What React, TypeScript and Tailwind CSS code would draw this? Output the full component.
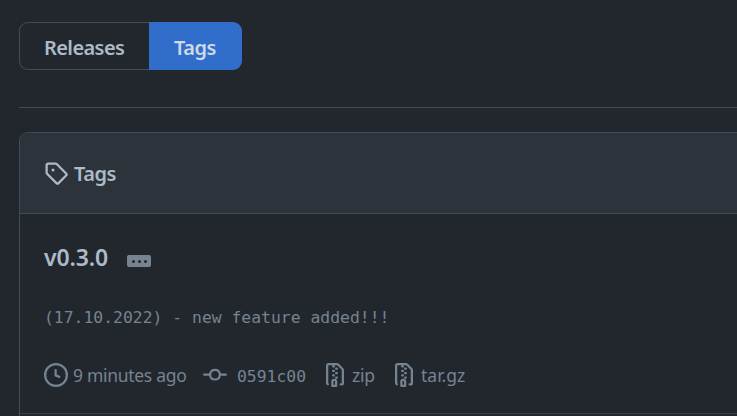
import type { ReactNode } from 'react';

const sans = "font-['Noto_Sans','Open_Sans',sans-serif]";
const mono = "font-['DejaVu_Sans_Mono',monospace]";

const paths = {
  tag: 'M1 7.775V2.75C1 1.784 1.784 1 2.75 1h5.025c.464 0 .91.184 1.238.513l6.25 6.25a1.75 1.75 0 0 1 0 2.474l-5.026 5.026a1.75 1.75 0 0 1-2.474 0l-6.25-6.25A1.752 1.752 0 0 1 1 7.775Zm1.5 0c0 .066.026.13.073.177l6.25 6.25a.25.25 0 0 0 .354 0l5.025-5.025a.25.25 0 0 0 0-.354l-6.25-6.25a.25.25 0 0 0-.177-.073H2.75a.25.25 0 0 0-.25.25ZM6 5a1 1 0 1 1 0 2 1 1 0 0 1 0-2Z',
  clock: 'M8 0a8 8 0 1 1 0 16A8 8 0 0 1 8 0ZM1.5 8a6.5 6.5 0 1 0 13 0 6.5 6.5 0 0 0-13 0Zm7-3.25v2.992l2.028.812a.75.75 0 0 1-.557 1.392l-2.5-1A.751.751 0 0 1 7 8.25v-3.5a.75.75 0 0 1 1.5 0Z',
  commit: 'M11.93 8.5a4.002 4.002 0 0 1-7.86 0H.75a.75.75 0 0 1 0-1.5h3.32a4.002 4.002 0 0 1 7.86 0h3.32a.75.75 0 0 1 0 1.5Zm-1.43-.75a2.5 2.5 0 1 0-5 0 2.5 2.5 0 0 0 5 0Z',
  zip: 'M3.5 1.75v11.5c0 .09.048.173.126.217a.75.75 0 0 1-.752 1.298A1.748 1.748 0 0 1 2 13.25V1.75C2 .784 2.784 0 3.75 0h5.586c.464 0 .909.185 1.237.513l2.914 2.914c.329.328.513.773.513 1.237v8.586A1.75 1.75 0 0 1 12.25 15h-.5a.75.75 0 0 1 0-1.5h.5a.25.25 0 0 0 .25-.25V4.664a.25.25 0 0 0-.073-.177L9.513 1.573a.25.25 0 0 0-.177-.073H7.25a.75.75 0 0 1 0 1.5h-.5a.75.75 0 0 1 0-1.5h-3a.25.25 0 0 0-.25.25Zm3.75 8.75h.5c.966 0 1.75.784 1.75 1.75v3a.75.75 0 0 1-.75.75h-2.5a.75.75 0 0 1-.75-.75v-3c0-.966.784-1.75 1.75-1.75ZM6 5.25a.75.75 0 0 1 .75-.75h.5a.75.75 0 0 1 0 1.5h-.5A.75.75 0 0 1 6 5.25Zm.75 2.25h.5a.75.75 0 0 1 0 1.5h-.5a.75.75 0 0 1 0-1.5ZM8 6.75A.75.75 0 0 1 8.75 6h.5a.75.75 0 0 1 0 1.5h-.5A.75.75 0 0 1 8 6.75ZM8.75 3h.5a.75.75 0 0 1 0 1.5h-.5a.75.75 0 0 1 0-1.5ZM8 9.75A.75.75 0 0 1 8.75 9h.5a.75.75 0 0 1 0 1.5h-.5A.75.75 0 0 1 8 9.75Zm-1 2.5v2.25h1v-2.25a.25.25 0 0 0-.25-.25h-.5a.25.25 0 0 0-.25.25Z',
};

function Icon({ name }: { name: keyof typeof paths }) {
  return (
    <svg viewBox="0 0 16 16" className="size-6 shrink-0 fill-current">
      <path d={paths[name]} />
    </svg>
  );
}

function Meta({ icon, className, children }: { icon: keyof typeof paths; className: string; children: ReactNode }) {
  return (
    <li className={`flex shrink-0 items-center ${className}`}>
      <Icon name={icon} />
      {children}
    </li>
  );
}

export default function App() {
  return (
    <main className={`h-[416px] overflow-hidden bg-[#22272e] pt-[22px] pl-[19px] text-[#adbac7] ${sans}`}>
      <nav className="flex h-12 w-[223px] text-[20px] leading-[44px] font-semibold">
        <a className="flex w-[130px] items-center rounded-l-[9px] border border-r-0 border-[#444c56] pl-6">
          <span className="pt-[4px] tracking-[-0.6px]">Releases</span>
        </a>
        <a className="flex flex-1 items-center rounded-r-[9px] bg-[#316dca] pl-[25px] text-[#cdd9e5]">
          <span className="pt-[4px] tracking-[-0.5px]">Tags</span>
        </a>
      </nav>

      <hr className="mt-[37px] border-t border-[#444c56]" />

      <section className="mt-6 h-[330px] rounded-tl-[9px] border-t border-l border-[#444c56]">
        <header className="flex h-[81px] items-center gap-[6px] rounded-tl-[8px] border-b border-[#444c56] bg-[#2d333b] pl-6">
          <Icon name="tag" />
          <h2 className="pt-[2px] text-[20px] font-semibold tracking-[-0.5px]">Tags</h2>
        </header>

        <article className="h-[200px] border-b border-[#373e47] pl-6">
          <div className="flex h-[88px] items-center">
            <h3 className="w-[83px] pb-[2px] text-[23px] font-semibold tracking-[-0.1px]">v0.3.0</h3>
            <button className="mt-[6px] flex h-3 w-6 items-center justify-center gap-[3px] rounded-[2px] bg-[#768390]">
              <i className="size-[3px] rounded-full bg-[#22272e]" />
              <i className="size-[3px] rounded-full bg-[#22272e]" />
              <i className="size-[3px] rounded-full bg-[#22272e]" />
            </button>
          </div>
          <pre className={`h-[30px] text-[16.4px] leading-[32px] text-[#768390] ${mono}`}>
            (17.10.2022) - new feature added!!!
          </pre>
          <ul className="mt-[31px] flex h-6 text-[17.5px] leading-6 text-[#768390]">
            <Meta icon="clock" className="w-[159px] gap-[5px]">
              <span className="tracking-[-0.3px]">9 minutes ago</span>
            </Meta>
            <Meta icon="commit" className="w-[120px] gap-[10px]">
              <code className={`pt-[3px] text-[16.4px] ${mono}`}>0591c00</code>
            </Meta>
            <Meta icon="zip" className="w-[69px] gap-[5px]">
              <span className="tracking-[-0.3px]">zip</span>
            </Meta>
            <Meta icon="zip" className="gap-[5px]">
              <span className="tracking-[0px]">tar.gz</span>
            </Meta>
          </ul>
        </article>
      </section>
    </main>
  );
}
